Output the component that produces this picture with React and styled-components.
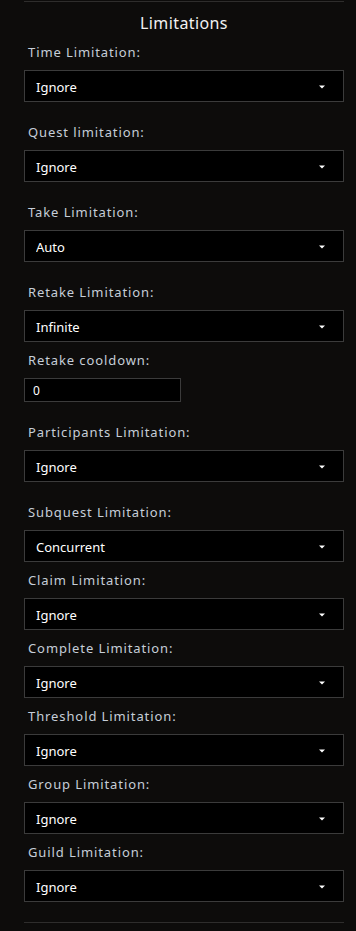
import React from "react";
import styled, { createGlobalStyle } from "styled-components";

const Global = createGlobalStyle`
  html, body { margin: 0; padding: 0; background: #0d0c0b; }
  body { font-family: "Noto Sans", "DejaVu Sans", sans-serif; }
`;

const Panel = styled.section`
  box-sizing: border-box;
  width: 356px;
  min-height: 931px;
  padding: 1px 12px 0 24px;
  background: #0d0c0b;
`;

const Rule = styled.hr`
  margin: 0;
  border: 0;
  border-top: 1px solid #2e2d2c;
  height: 0;
`;

const Title = styled.h2`
  margin: 11px 0 10px;
  font-size: 16px;
  line-height: 20px;
  font-weight: 400;
  letter-spacing: 0.4px;
  color: #f2f2f2;
  text-align: center;
`;

const Field = styled.div`
  display: flex;
  flex-direction: column;
  gap: 9px;
  margin-bottom: ${(p) => (p.$spaced ? 21 : p.$last ? 0 : 9)}px;
`;

const Label = styled.label`
  padding-left: 4px;
  font-size: 13px;
  line-height: 18px;
  letter-spacing: 0.9px;
  color: #c6ced8;
`;

const SelectWrap = styled.div`
  position: relative;
  width: 320px;
  height: 32px;
`;

const Select = styled.select`
  appearance: none;
  -webkit-appearance: none;
  box-sizing: border-box;
  width: 100%;
  height: 100%;
  margin: 0;
  padding: 2px 30px 0 11px;
  background: #000;
  border: 1px solid #3b3b3b;
  border-radius: 0;
  color: #fff;
  font-family: "Noto Sans", "DejaVu Sans", sans-serif;
  font-size: 13px;
  outline: none;
`;

const Arrow = styled.svg`
  position: absolute;
  right: 19px;
  top: 15px;
  width: 6px;
  height: 4px;
  pointer-events: none;
`;

const NumberInput = styled.input`
  box-sizing: border-box;
  width: 157px;
  height: 24px;
  margin: 0;
  padding: 1px 8px 0;
  background: #000;
  border: 1px solid #3b3b3b;
  border-radius: 0;
  color: #fff;
  font-family: "Noto Sans", "DejaVu Sans", sans-serif;
  font-size: 12px;
  outline: none;
`;

const BottomRule = styled(Rule)`
  margin-top: 20px;
`;

function Dropdown({ value }) {
  return (
    <SelectWrap>
      <Select defaultValue={value}>
        <option value={value}>{value}</option>
      </Select>
      <Arrow viewBox="0 0 6 4">
        <path d="M0 0.5 H6 L3 3.5 Z" fill="#fff" />
      </Arrow>
    </SelectWrap>
  );
}

const fields = [
  { label: "Time Limitation:", value: "Ignore", spaced: true },
  { label: "Quest limitation:", value: "Ignore", spaced: true },
  { label: "Take Limitation:", value: "Auto", spaced: true },
  { label: "Retake Limitation:", value: "Infinite", spaced: false },
  { label: "Retake cooldown:", input: "0", spaced: true },
  { label: "Participants Limitation:", value: "Ignore", spaced: true },
  { label: "Subquest Limitation:", value: "Concurrent", spaced: false },
  { label: "Claim Limitation:", value: "Ignore", spaced: false },
  { label: "Complete Limitation:", value: "Ignore", spaced: false },
  { label: "Threshold Limitation:", value: "Ignore", spaced: false },
  { label: "Group Limitation:", value: "Ignore", spaced: false },
  { label: "Guild Limitation:", value: "Ignore", spaced: false, last: true },
];

export default function App() {
  return (
    <>
      <Global />
      <Panel>
        <Rule />
        <Title>Limitations</Title>
        {fields.map((f) => (
          <Field key={f.label} $spaced={f.spaced} $last={f.last}>
            <Label>{f.label}</Label>
            {f.input !== undefined ? (
              <NumberInput type="text" defaultValue={f.input} />
            ) : (
              <Dropdown value={f.value} />
            )}
          </Field>
        ))}
        <BottomRule />
      </Panel>
    </>
  );
}
